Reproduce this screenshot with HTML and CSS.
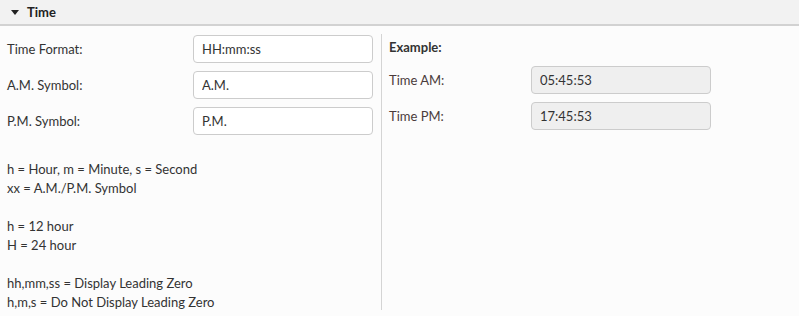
FILE: index.html
```html
<!DOCTYPE html>
<html lang="en">
<head>
  <meta charset="UTF-8" />
  <title>Time Settings</title>
  <link rel="stylesheet" href="styles.css">
</head>
<body>
  <div class="panel-head">
    <span class="caret"></span>
    <span class="panel-title">Time</span>
  </div>
  <div class="panel-body">
    <div class="col-left">
      <div class="row">
        <label>Time Format:</label>
        <input type="text" class="field" value="HH:mm:ss">
      </div>
      <div class="row">
        <label>A.M. Symbol:</label>
        <input type="text" class="field" value="A.M.">
      </div>
      <div class="row">
        <label>P.M. Symbol:</label>
        <input type="text" class="field" value="P.M.">
      </div>

      <div class="help">
        <p>h = Hour, m = Minute, s = Second<br>xx = A.M./P.M. Symbol</p>
        <p>h = 12 hour<br>H = 24 hour</p>
        <p>hh,mm,ss = Display Leading Zero<br>h,m,s = Do Not Display Leading Zero</p>
      </div>
    </div>

    <div class="col-right">
      <div class="example-title">Example:</div>
      <div class="row">
        <label class="ex-label">Time AM:</label>
        <input type="text" class="field readonly" value="05:45:53" readonly>
      </div>
      <div class="row">
        <label class="ex-label">Time PM:</label>
        <input type="text" class="field readonly" value="17:45:53" readonly>
      </div>
    </div>
  </div>
</body>
</html>
```

FILE: styles.css
```css
body {
  margin: 0;
  font-family: Lato, "Open Sans", sans-serif;
  font-size: 13px;
  color: #333;
  background: #fcfcfc;
}
.panel-head {
  height: 24px;
  display: flex;
  align-items: center;
  gap: 8px;
  padding-left: 11px;
  background: #f2f2f2;
  border-bottom: 2px solid #d2d2d2;
}
.caret {
  width: 0;
  height: 0;
  border-left: 4.5px solid transparent;
  border-right: 4.5px solid transparent;
  border-top: 5px solid #222;
}
.panel-title {
  font-weight: bold;
  color: #222;
}
.panel-body {
  display: flex;
  padding-top: 8px;
}
.col-left {
  width: 374px;
  padding: 1px 0 0 7px;
}
.col-right {
  border-left: 1px solid #d4d4d4;
  padding-left: 7px;
  height: 276px;
}
.row {
  display: flex;
  align-items: center;
  margin-bottom: 8px;
}
.row label {
  width: 186px;
}
.col-right .row label {
  width: 142px;
}
.field {
  box-sizing: border-box;
  width: 180px;
  height: 28px;
  padding: 0 8px;
  border: 1px solid #cccccc;
  border-radius: 4px;
  background: #fff;
  font: inherit;
  color: #333;
}
.field.readonly {
  background: #efefef;
}
.ex-label {
  color: #4a3b3b;
}
.example-title {
  font-weight: bold;
  height: 24px;
  line-height: 24px;
  margin: 1px 0 7px;
}
.help {
  margin-top: 25px;
}
.help p {
  margin: 0 0 19px;
  line-height: 19px;
}
```
